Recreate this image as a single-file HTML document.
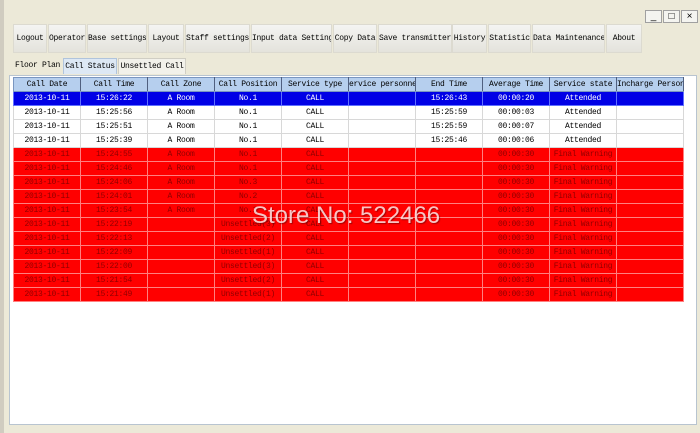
<!DOCTYPE html>
<html><head><style>
*{margin:0;padding:0;box-sizing:border-box}
body{width:700px;height:433px;background:#ece9d8;position:relative;overflow:hidden;font-family:"Liberation Mono",monospace;font-size:8px;color:#000}
.b{position:absolute;top:24px;height:29px;background:linear-gradient(#f4f4f2,#e4e3dc);border:1px solid #dcdad0;line-height:27px;text-align:center;font-size:8px;letter-spacing:-0.3px;white-space:nowrap;overflow:hidden}
.t{position:absolute;top:58px;height:16px;line-height:15px;text-align:center;font-size:8px;letter-spacing:-0.3px;white-space:nowrap}
.panel{position:absolute;left:9px;top:75px;width:688px;height:350px;background:#fff;border:1px solid #b8c4d0}
table{position:absolute;left:13px;top:77px;width:670px;border-collapse:collapse;table-layout:fixed}
td,th{width:67px;height:14px;text-align:center;font-size:8px;font-weight:normal;white-space:nowrap;overflow:hidden;border:1px solid #d8d8d8;letter-spacing:-0.3px;padding:0}
th{background:#b6cfee;border-color:#7a96c0;border-right:1px solid #506080}
tr.s td{background:#0000e6;color:#fff;border-color:#6070ff}
tr.r td{background:#ff0000;color:#900000;border-color:#ff8080}
.w{position:absolute;top:10px;width:17px;height:13px;border:1px solid #a0a0a0;background:#f4f4f0;font-size:10px;line-height:11px;text-align:center;font-family:"Liberation Sans",sans-serif}
</style></head><body>
<div style="position:absolute;left:0;top:0;width:4px;height:433px;background:#d0ccc0"></div>
<div class="w" style="left:645px">_</div><div class="w" style="left:663px">□</div><div class="w" style="left:681px">×</div>
<div class="b" style="left:13px;width:34px">Logout</div>
<div class="b" style="left:48px;width:38px">Operator</div>
<div class="b" style="left:87px;width:60px">Base settings</div>
<div class="b" style="left:148px;width:36px">Layout</div>
<div class="b" style="left:185px;width:65px">Staff settings</div>
<div class="b" style="left:251px;width:81px">Input data Setting</div>
<div class="b" style="left:333px;width:44px">Copy Data</div>
<div class="b" style="left:378px;width:74px">Save transmitter</div>
<div class="b" style="left:452px;width:35px">History</div>
<div class="b" style="left:488px;width:43px">Statistic</div>
<div class="b" style="left:532px;width:73px">Data Maintenance</div>
<div class="b" style="left:606px;width:36px">About</div>
<div class="t" style="left:13px;width:49px">Floor Plan</div>
<div class="t" style="left:63px;width:54px;background:#dde8f4;border:1px solid #b0c4dc;border-bottom:none">Call Status</div>
<div class="t" style="left:118px;width:68px;background:#f2f1ea;border:1px solid #d0cec4;border-bottom:none">Unsettled Call</div>
<div class="panel"></div>
<table>
<tr><th>Call Date</th><th>Call Time</th><th>Call Zone</th><th>Call Position</th><th>Service type</th><th>ervice personne</th><th>End Time</th><th>Average Time</th><th>Service state</th><th>Incharge Person</th></tr>
<tr class="s"><td>2013-10-11</td><td>15:26:22</td><td>A Room</td><td>No.1</td><td>CALL</td><td></td><td>15:26:43</td><td>00:00:20</td><td>Attended</td><td></td></tr>
<tr><td>2013-10-11</td><td>15:25:56</td><td>A Room</td><td>No.1</td><td>CALL</td><td></td><td>15:25:59</td><td>00:00:03</td><td>Attended</td><td></td></tr>
<tr><td>2013-10-11</td><td>15:25:51</td><td>A Room</td><td>No.1</td><td>CALL</td><td></td><td>15:25:59</td><td>00:00:07</td><td>Attended</td><td></td></tr>
<tr><td>2013-10-11</td><td>15:25:39</td><td>A Room</td><td>No.1</td><td>CALL</td><td></td><td>15:25:46</td><td>00:00:06</td><td>Attended</td><td></td></tr>
<tr class="r"><td>2013-10-11</td><td>15:24:55</td><td>A Room</td><td>No.1</td><td>CALL</td><td></td><td></td><td>00:00:30</td><td>Final Warning</td><td></td></tr>
<tr class="r"><td>2013-10-11</td><td>15:24:46</td><td>A Room</td><td>No.1</td><td>CALL</td><td></td><td></td><td>00:00:30</td><td>Final Warning</td><td></td></tr>
<tr class="r"><td>2013-10-11</td><td>15:24:06</td><td>A Room</td><td>No.3</td><td>CALL</td><td></td><td></td><td>00:00:30</td><td>Final Warning</td><td></td></tr>
<tr class="r"><td>2013-10-11</td><td>15:24:01</td><td>A Room</td><td>No.2</td><td>CALL</td><td></td><td></td><td>00:00:30</td><td>Final Warning</td><td></td></tr>
<tr class="r"><td>2013-10-11</td><td>15:23:54</td><td>A Room</td><td>No.1</td><td>CALL</td><td></td><td></td><td>00:00:30</td><td>Final Warning</td><td></td></tr>
<tr class="r"><td>2013-10-11</td><td>15:22:19</td><td></td><td>Unsettled(3)</td><td>CALL</td><td></td><td></td><td>00:00:30</td><td>Final Warning</td><td></td></tr>
<tr class="r"><td>2013-10-11</td><td>15:22:13</td><td></td><td>Unsettled(2)</td><td>CALL</td><td></td><td></td><td>00:00:30</td><td>Final Warning</td><td></td></tr>
<tr class="r"><td>2013-10-11</td><td>15:22:09</td><td></td><td>Unsettled(1)</td><td>CALL</td><td></td><td></td><td>00:00:30</td><td>Final Warning</td><td></td></tr>
<tr class="r"><td>2013-10-11</td><td>15:22:00</td><td></td><td>Unsettled(3)</td><td>CALL</td><td></td><td></td><td>00:00:30</td><td>Final Warning</td><td></td></tr>
<tr class="r"><td>2013-10-11</td><td>15:21:54</td><td></td><td>Unsettled(2)</td><td>CALL</td><td></td><td></td><td>00:00:30</td><td>Final Warning</td><td></td></tr>
<tr class="r"><td>2013-10-11</td><td>15:21:49</td><td></td><td>Unsettled(1)</td><td>CALL</td><td></td><td></td><td>00:00:30</td><td>Final Warning</td><td></td></tr>
</table>
<div style="position:absolute;left:252px;top:202px;font-family:'Liberation Sans',sans-serif;font-size:24px;color:rgba(255,230,230,0.85);text-shadow:1px 1px 1px rgba(80,0,0,0.5)">Store No: 522466</div>
</body></html>
